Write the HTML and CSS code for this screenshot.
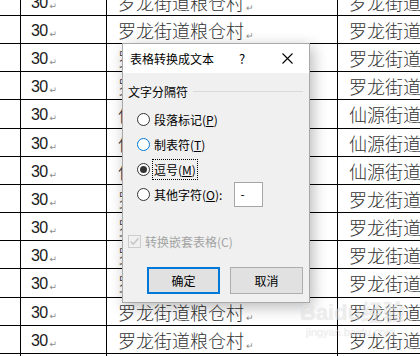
FILE: index.html
```html
<!DOCTYPE html>
<html lang="zh-CN">
<head>
    <meta charset="UTF-8">
    <title>表格转换成文本</title>
    <link rel="stylesheet" href="styles.css">
</head>
<body>
    <div class="page">
        <div class="sheet">
            <div class="cell"></div><div class="cell num">30<span class="mark">↵</span></div><div class="cell cn">罗龙街道粮仓村<span class="mark">↵</span></div><div class="cell cn">罗龙街道粮仓村</div>
            <div class="cell"></div><div class="cell num">30<span class="mark">↵</span></div><div class="cell cn">罗龙街道粮仓村<span class="mark">↵</span></div><div class="cell cn">罗龙街道粮仓村</div>
            <div class="cell"></div><div class="cell num">30<span class="mark">↵</span></div><div class="cell cn">罗龙街道粮仓村<span class="mark">↵</span></div><div class="cell cn">罗龙街道粮仓村</div>
            <div class="cell"></div><div class="cell num">30<span class="mark">↵</span></div><div class="cell cn">罗龙街道粮仓村<span class="mark">↵</span></div><div class="cell cn">罗龙街道粮仓村</div>
            <div class="cell"></div><div class="cell num">30<span class="mark">↵</span></div><div class="cell cn">仙源街道仙源村<span class="mark">↵</span></div><div class="cell cn">仙源街道仙源村</div>
            <div class="cell"></div><div class="cell num">30<span class="mark">↵</span></div><div class="cell cn">仙源街道仙源村<span class="mark">↵</span></div><div class="cell cn">仙源街道仙源村</div>
            <div class="cell"></div><div class="cell num">30<span class="mark">↵</span></div><div class="cell cn">仙源街道仙源村<span class="mark">↵</span></div><div class="cell cn">仙源街道仙源村</div>
            <div class="cell"></div><div class="cell num">30<span class="mark">↵</span></div><div class="cell cn">罗龙街道粮仓村<span class="mark">↵</span></div><div class="cell cn">罗龙街道粮仓村</div>
            <div class="cell"></div><div class="cell num">30<span class="mark">↵</span></div><div class="cell cn">罗龙街道粮仓村<span class="mark">↵</span></div><div class="cell cn">罗龙街道粮仓村</div>
            <div class="cell"></div><div class="cell num">30<span class="mark">↵</span></div><div class="cell cn">罗龙街道粮仓村<span class="mark">↵</span></div><div class="cell cn">罗龙街道粮仓村</div>
            <div class="cell"></div><div class="cell num">30<span class="mark">↵</span></div><div class="cell cn">罗龙街道粮仓村<span class="mark">↵</span></div><div class="cell cn">罗龙街道粮仓村</div>
            <div class="cell"></div><div class="cell num">30<span class="mark">↵</span></div><div class="cell cn">罗龙街道粮仓村<span class="mark">↵</span></div><div class="cell cn">罗龙街道粮仓村</div>
            <div class="cell"></div><div class="cell num">30<span class="mark">↵</span></div><div class="cell cn">罗龙街道粮仓村<span class="mark">↵</span></div><div class="cell cn">罗龙街道粮仓村</div>
            <div class="cell"></div><div class="cell num">30<span class="mark">↵</span></div><div class="cell cn">罗龙街道粮仓村<span class="mark">↵</span></div><div class="cell cn">罗龙街道粮仓村</div>
        </div>

        <div class="dialog">
            <div class="titlebar">
                <span class="title">表格转换成文本</span>
                <span class="help">?</span>
                <span class="close">
                    <svg width="11" height="11" viewBox="0 0 11 11"><path d="M0.5 0.5L10.5 10.5M10.5 0.5L0.5 10.5" stroke="#000" stroke-width="1.1" fill="none"/></svg>
                </span>
            </div>
            <div class="body">
                <div class="group-head">
                    <span>文字分隔符</span>
                    <span class="rule"></span>
                </div>
                <div class="radios">
                    <div class="radio-row"><span class="radio"></span><span>段落标记(<u>P</u>)</span></div>
                    <div class="radio-row"><span class="radio hover"></span><span>制表符(<u>T</u>)</span></div>
                    <div class="radio-row"><span class="radio checked"></span><span class="focus">逗号(<u>M</u>)</span></div>
                    <div class="radio-row"><span class="radio"></span><span>其他字符(<u>O</u>):</span><span class="textbox">-</span></div>
                </div>
                <div class="check-row">
                    <span class="checkbox">
                        <svg width="11" height="11" viewBox="0 0 11 11"><path d="M1.5 5.5L4.2 8.3L9.5 2.2" stroke="#c2c2c2" stroke-width="1.3" fill="none"/></svg>
                    </span>
                    <span>转换嵌套表格(C)</span>
                </div>
                <div class="buttons">
                    <span class="btn default">确定</span>
                    <span class="btn">取消</span>
                </div>
            </div>
        </div>

        <div class="watermark">
            <div class="wm-logo">Baidu经验</div>
            <div class="wm-url">jingyan.baidu.com</div>
        </div>
    </div>
</body>
</html>
```

FILE: styles.css
```css
body {
    margin: 0;
    background-color: #fff;
    overflow: hidden;
}
.page {
    position: relative;
    width: 420px;
    height: 356px;
    overflow: hidden;
}
.sheet {
    display: grid;
    grid-template-columns: 81px 86px 231px 200px;
    grid-auto-rows: 28.17px;
    width: max-content;
    margin: -12.2px 0 0 -60px;
}
.cell {
    box-sizing: border-box;
    border-right: 1px solid #000;
    border-bottom: 1px solid #000;
    padding: 1px 0 0 10px;
    line-height: 27px;
    white-space: nowrap;
    overflow: hidden;
}
.num {
    font-family: "Liberation Sans", Arial, sans-serif;
    font-size: 16px;
    letter-spacing: -0.6px;
    color: #1a1a1a;
}
.cn {
    padding-left: 11px;
    font-family: "Noto Sans CJK SC", sans-serif;
    font-size: 18px;
    font-weight: 300;
    color: #333;
}
.mark {
    font-family: "DejaVu Sans", sans-serif;
    font-size: 9px;
    letter-spacing: 0;
    color: #8a8a8a;
    margin-left: 2px;
    vertical-align: -1px;
}

.dialog {
    position: absolute;
    left: 122px;
    top: 43px;
    width: 188px;
    height: 260px;
    box-sizing: border-box;
    border: 1px solid #a9a9a9;
    background-color: #f0f0f0;
    box-shadow: 3px 4px 14px rgba(0, 0, 0, 0.28);
    display: flex;
    flex-direction: column;
    font-family: "Noto Sans CJK SC", sans-serif;
    font-size: 12px;
    color: #000;
}
.titlebar {
    height: 29px;
    flex: none;
    background-color: #fff;
    display: flex;
    align-items: center;
    padding-left: 7px;
}
.title {
    flex: 1;
}
.help {
    width: 20px;
    margin-right: 20px;
    text-align: center;
    font-size: 13px;
}
.close {
    width: 30px;
    margin-right: 7px;
    display: flex;
    justify-content: center;
}
.body {
    flex: 1;
    padding: 10px 6px 0 5px;
}
.group-head {
    display: flex;
    align-items: center;
    gap: 5px;
    height: 16px;
}
.rule {
    flex: 1;
    height: 1px;
    background-color: #dadada;
}
.radios {
    display: flex;
    flex-direction: column;
    gap: 9px;
    margin-top: 12px;
    padding-left: 9px;
}
.radio-row {
    display: flex;
    align-items: center;
    height: 16px;
}
.radio {
    width: 13px;
    height: 13px;
    box-sizing: border-box;
    border: 1px solid #333;
    border-radius: 50%;
    background-color: #fff;
    margin-right: 4px;
    display: flex;
    align-items: center;
    justify-content: center;
}
.radio.hover {
    border-color: #0078d7;
}
.radio.checked::after {
    content: "";
    width: 7px;
    height: 7px;
    border-radius: 50%;
    background-color: #333;
}
.focus {
    outline: 1px dotted #000;
    outline-offset: 1px;
}
.textbox {
    width: 29px;
    height: 25px;
    box-sizing: border-box;
    border: 1px solid #a6a6a6;
    background-color: #fff;
    margin-left: 12px;
    padding-left: 5px;
    line-height: 21px;
}
.check-row {
    display: flex;
    align-items: center;
    height: 16px;
    margin-top: 31px;
    color: #a3a3a3;
}
.checkbox {
    width: 13px;
    height: 13px;
    box-sizing: border-box;
    border: 1px solid #cccccc;
    background-color: #f0f0f0;
    margin-right: 4px;
    display: flex;
    align-items: center;
    justify-content: center;
}
.buttons {
    display: flex;
    justify-content: flex-end;
    gap: 10px;
    margin-top: 18px;
}
.btn {
    width: 73px;
    height: 27px;
    box-sizing: border-box;
    border: 1px solid #adadad;
    background-color: #e1e1e1;
    display: flex;
    align-items: center;
    justify-content: center;
}
.btn.default {
    border: 2px solid #0078d7;
}

.watermark {
    position: absolute;
    left: 300px;
    top: 300px;
    color: rgba(255, 255, 255, 0.5);
    text-shadow: 0 0 1px rgba(0, 0, 0, 0.15);
    pointer-events: none;
}
.wm-logo {
    font-family: "Liberation Sans", "Noto Sans CJK SC", sans-serif;
    font-size: 22px;
    font-weight: bold;
    line-height: 26px;
}
.wm-url {
    font-family: "Liberation Sans", sans-serif;
    font-size: 11px;
    padding-left: 6px;
}
```
